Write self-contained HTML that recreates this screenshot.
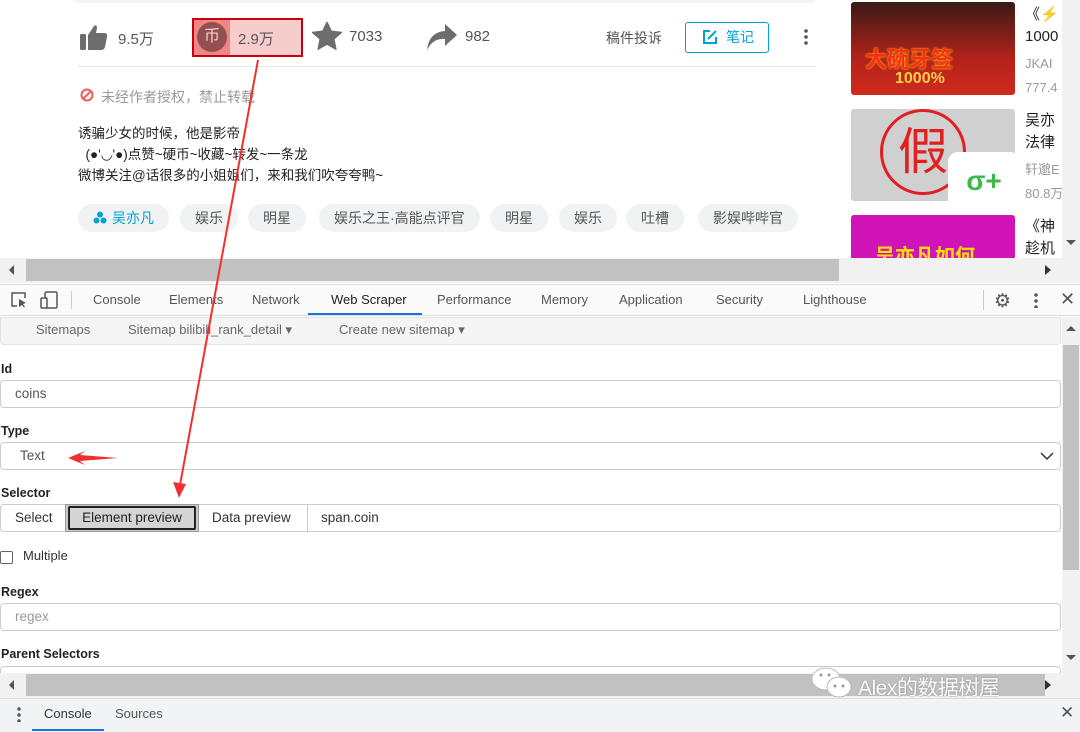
<!DOCTYPE html>
<html><head><meta charset="utf-8"><style>
*{box-sizing:border-box;margin:0;padding:0}
body{width:1080px;height:732px;overflow:hidden;position:relative;background:#fff;font-family:"Liberation Sans","Noto Sans CJK SC",sans-serif;color:#333}
.a{position:absolute}
.t{font-size:14px;color:#333}
.tag{position:absolute;top:204px;height:28px;border-radius:14px;background:#f1f2f3;font-size:14px;color:#555;line-height:28px;padding:0 15px}
.tab{position:absolute;top:292px;font-size:13px;color:#555}
.lbl{position:absolute;left:1px;font-size:12.5px;font-weight:bold;color:#222}
.inp{position:absolute;left:0;width:1061px;height:28px;border:1px solid #ccc;border-radius:4px;font-size:13.5px;color:#555;line-height:26px;padding-left:14px}
</style></head><body>
<div class="a" style="left:75px;top:0;width:740px;height:3px;background:#f4f5f7"></div>
<svg class="a" style="left:80px;top:24px" width="30" height="26" viewBox="0 0 30 26"><rect x="0" y="10" width="6" height="16" rx="1.5" fill="#6d6d6d"/><path d="M8 11 L14 2 Q17 0 17 4 L16 9 L25 9 Q28 10 27 13 L25 23 Q24 26 21 26 L8 26Z" fill="#6d6d6d"/></svg>
<div class="a t" style="left:118px;top:28px;font-size:15px;color:#555">9.5万</div>
<div class="a" style="left:192px;top:18px;width:111px;height:39px;border:2px solid #c9000a;background:#f7cccd"></div>
<div class="a" style="left:194px;top:20px;width:36px;height:35px;background:#ef8585"></div>
<div class="a" style="left:197px;top:22px;width:30px;height:30px;border-radius:50%;background:#945050;color:#f7cccd;font-size:16px;text-align:center;line-height:30px">币</div>
<div class="a t" style="left:238px;top:28px;font-size:15px;color:#555">2.9万</div>
<svg class="a" style="left:312px;top:22px" width="30" height="28" viewBox="0 0 24 23"><path d="M12 0 L15.5 7.5 L24 8.5 L17.7 14 L19.4 22.5 L12 18.3 L4.6 22.5 L6.3 14 L0 8.5 L8.5 7.5Z" fill="#6d6d6d" stroke="#6d6d6d" stroke-linejoin="round"/></svg>
<div class="a t" style="left:349px;top:28px;font-size:15px;color:#555">7033</div>
<svg class="a" style="left:427px;top:24px" width="30" height="26" viewBox="0 0 30 26"><path d="M18 0 L30 11 L18 22 L18 15 Q6 14 0 26 Q2 8 18 7Z" fill="#6d6d6d"/></svg>
<div class="a t" style="left:465px;top:28px;font-size:15px;color:#555">982</div>
<div class="a t" style="left:606px;top:28px;color:#555">稿件投诉</div>
<div class="a" style="left:685px;top:22px;width:84px;height:31px;border:1px solid #00a1d6;border-radius:3px;color:#00a1d6;font-size:14px;line-height:29px;padding-left:40px">笔记</div>
<svg class="a" style="left:703px;top:30px" width="14" height="14" viewBox="0 0 14 14"><path d="M7 1H1V13H13V7M5 9L13 1" stroke="#00a1d6" stroke-width="2" fill="none"/></svg>
<div class="a" style="left:804px;top:28px;width:4px;height:18px;background:radial-gradient(circle,#555 1.6px,transparent 2px) 0 0/4px 6px"></div>
<div class="a" style="left:78px;top:66px;width:738px;height:1px;background:#e7e7ee"></div>
<svg class="a" style="left:80px;top:88px" width="14" height="14" viewBox="0 0 14 14"><circle cx="7" cy="7" r="5.5" stroke="#f25d5d" stroke-width="2" fill="none"/><path d="M3 11L11 3" stroke="#f25d5d" stroke-width="2"/></svg>
<div class="a t" style="left:101px;top:87px;color:#999">未经作者授权，禁止转载</div>
<div class="a" style="left:78px;top:123px;font-size:13.5px;line-height:21px;color:#222">诱骗少女的时候，他是影帝<br>&nbsp;&nbsp;(●'◡'●)点赞~硬币~收藏~转发~一条龙<br>微博关注@话很多的小姐姐们，来和我们吹夸夸鸭~</div>
<div class="tag" style="left:78px;color:#00a1d6;padding-left:34px">吴亦凡</div>
<svg class="a" style="left:93px;top:211px" width="14" height="13" viewBox="0 0 14 13"><circle cx="7" cy="3.5" r="3" fill="#00a1d6"/><circle cx="3.5" cy="9.5" r="3" fill="#00a1d6"/><circle cx="10.5" cy="9.5" r="3" fill="#00a1d6"/></svg>
<div class="tag" style="left:180px">娱乐</div>
<div class="tag" style="left:248px">明星</div>
<div class="tag" style="left:319px">娱乐之王·高能点评官</div>
<div class="tag" style="left:490px">明星</div>
<div class="tag" style="left:559px">娱乐</div>
<div class="tag" style="left:626px">吐槽</div>
<div class="tag" style="left:698px">影娱哔哔官</div>
<div class="a" style="left:851px;top:2px;width:164px;height:93px;background:linear-gradient(180deg,#3a1a15,#b2221a 60%,#d02a1e);border-radius:3px"></div>
<div class="a" style="left:865px;top:42px;color:#ff2a1a;font-size:22px;font-weight:bold;text-shadow:0 0 2px #ff0">大碗牙签</div>
<div class="a" style="left:895px;top:70px;color:#ffd040;font-size:16px;font-weight:bold">1000%</div>
<div class="a" style="left:851px;top:109px;width:164px;height:92px;background:#d0d0d0;border-radius:3px"></div>
<div class="a" style="left:880px;top:109px;width:86px;height:86px;border:3px solid #e02020;border-radius:50%;color:#e02020;font-size:50px;line-height:80px;text-align:center">假</div>
<div class="a" style="left:948px;top:152px;width:72px;height:58px;background:#fff;border-radius:10px;color:#3bba4e;font-size:28px;font-weight:bold;text-align:center;line-height:58px">σ+</div>
<div class="a" style="left:851px;top:215px;width:164px;height:45px;background:#d014b8;border-radius:3px"></div>
<div class="a" style="left:875px;top:240px;color:#ffe000;font-size:20px;font-weight:bold">吴亦凡如何</div>
<div class="a" style="left:1025px;top:4px;font-size:15px;line-height:22px;color:#222">《⚡<br>1000</div>
<div class="a" style="left:1025px;top:52px;font-size:13px;line-height:24px;color:#999">JKAI<br>777.4</div>
<div class="a" style="left:1025px;top:110px;font-size:15px;line-height:22px;color:#222">吴亦<br>法律</div>
<div class="a" style="left:1025px;top:158px;font-size:13px;line-height:24px;color:#999">轩邈E<br>80.8万</div>
<div class="a" style="left:1025px;top:216px;font-size:15px;line-height:22px;color:#222">《神<br>趁机</div>
<div class="a" style="left:1062px;top:0;width:18px;height:258px;background:#f1f1f1"></div>
<div class="a" style="left:1066px;top:240px;border:5px solid transparent;border-top:5px solid #555"></div>
<div class="a" style="left:0;top:258px;width:1080px;height:25px;background:#f1f1f1"></div>
<div class="a" style="left:26px;top:259px;width:813px;height:22px;background:#c1c1c1"></div>
<div class="a" style="left:9px;top:265px;border:5px solid transparent;border-right:5px solid #555;border-left:0"></div>
<div class="a" style="left:1045px;top:265px;border:5px solid transparent;border-left:6px solid #333;border-right:0"></div>
<div class="a" style="left:0;top:284px;width:1080px;height:32px;background:#fafafa;border-bottom:1px solid #ddd;border-top:1px solid #ddd"></div>
<svg class="a" style="left:11px;top:292px" width="16" height="16" viewBox="0 0 16 16"><path d="M6 14H1V1H14V6" stroke="#555" stroke-width="1.5" fill="none"/><path d="M8 7L15 11L12 12L14 15L13 15.5L11 13L8 15Z" fill="#555"/></svg>
<svg class="a" style="left:40px;top:291px" width="20" height="18" viewBox="0 0 20 18"><rect x="5" y="1" width="12" height="16" rx="1.5" stroke="#555" stroke-width="1.5" fill="none"/><rect x="1" y="7" width="6" height="10" rx="1" stroke="#555" stroke-width="1.5" fill="#fafafa"/></svg>
<div class="a" style="left:71px;top:291px;width:1px;height:18px;background:#ccc"></div>
<div class="tab" style="left:93px">Console</div>
<div class="tab" style="left:169px">Elements</div>
<div class="tab" style="left:252px">Network</div>
<div class="tab" style="left:331px;color:#222">Web Scraper</div>
<div class="a" style="left:308px;top:313px;width:114px;height:2px;background:#1a73e8"></div>
<div class="tab" style="left:437px">Performance</div>
<div class="tab" style="left:541px">Memory</div>
<div class="tab" style="left:619px">Application</div>
<div class="tab" style="left:716px">Security</div>
<div class="tab" style="left:803px">Lighthouse</div>
<div class="a" style="left:983px;top:290px;width:1px;height:20px;background:#ccc"></div>
<div class="a" style="left:994px;top:290px;font-size:19px;color:#555">⚙</div>
<div class="a" style="left:1034px;top:292px;width:4px;height:16px;background:radial-gradient(circle,#555 1.5px,transparent 2px) 0 0/4px 6px"></div>
<div class="a" style="left:1060px;top:289px;font-size:18px;color:#555">✕</div>
<div class="a" style="left:0;top:317px;width:1061px;height:28px;background:#f5f5f5;border:1px solid #e3e3e3;border-radius:0 0 4px 4px"></div>
<div class="a" style="left:36px;top:322px;font-size:13px;color:#666">Sitemaps</div>
<div class="a" style="left:128px;top:322px;font-size:13px;color:#666">Sitemap bilibili_rank_detail ▾</div>
<div class="a" style="left:339px;top:322px;font-size:13px;color:#666">Create new sitemap ▾</div>
<div class="lbl" style="top:362px">Id</div>
<div class="inp" style="top:380px">coins</div>
<div class="lbl" style="top:424px">Type</div>
<div class="inp" style="top:442px;padding-left:19px">Text</div>
<svg class="a" style="left:1040px;top:451px" width="14" height="10" viewBox="0 0 14 10"><path d="M1 2L7 8L13 2" stroke="#333" stroke-width="1.5" fill="none"/></svg>
<div class="lbl" style="top:486px">Selector</div>
<div class="inp" style="top:504px;padding:0"></div>
<div class="a" style="left:15px;top:510px;font-size:13.5px;color:#333">Select</div>
<div class="a" style="left:65px;top:504px;width:134px;height:28px;border:1px solid #999;background:#ccc"></div>
<div class="a" style="left:68px;top:506px;width:128px;height:24px;border:2px solid #222;border-radius:2px;background:#d4d4d4;font-size:13.5px;text-align:center;line-height:20px;color:#222">Element preview</div>
<div class="a" style="left:212px;top:510px;font-size:13.5px;color:#333">Data preview</div>
<div class="a" style="left:307px;top:505px;width:1px;height:26px;background:#ccc"></div>
<div class="a" style="left:321px;top:510px;font-size:13.5px;color:#333">span.coin</div>
<div class="a" style="left:0;top:551px;width:13px;height:13px;border:1px solid #666;border-radius:2px"></div>
<div class="a" style="left:23px;top:548px;font-size:13px;color:#333">Multiple</div>
<div class="lbl" style="top:585px">Regex</div>
<div class="inp" style="top:603px;color:#999">regex</div>
<div class="lbl" style="top:647px">Parent Selectors</div>
<div class="inp" style="top:666px;height:20px"></div>
<div class="a" style="left:1062px;top:317px;width:18px;height:356px;background:#f1f1f1"></div>
<div class="a" style="left:1063px;top:345px;width:16px;height:225px;background:#c1c1c1"></div>
<div class="a" style="left:1066px;top:326px;border:5px solid transparent;border-bottom:5px solid #555;border-top:0"></div>
<div class="a" style="left:1066px;top:655px;border:5px solid transparent;border-top:5px solid #555;border-bottom:0"></div>
<div class="a" style="left:0;top:673px;width:1080px;height:25px;background:#f1f1f1"></div>
<div class="a" style="left:26px;top:674px;width:1019px;height:22px;background:#c1c1c1"></div>
<div class="a" style="left:9px;top:680px;border:5px solid transparent;border-right:5px solid #555;border-left:0"></div>
<div class="a" style="left:1045px;top:680px;border:5px solid transparent;border-left:6px solid #333;border-right:0"></div>
<svg class="a" style="left:810px;top:666px" width="46" height="36" viewBox="0 0 46 36"><ellipse cx="16" cy="13" rx="14" ry="11" fill="#fff" stroke="#bbb"/><ellipse cx="29" cy="21" rx="12" ry="10" fill="#fff" stroke="#bbb"/><circle cx="25" cy="20" r="1.5" fill="#999"/><circle cx="33" cy="20" r="1.5" fill="#999"/><circle cx="11" cy="9" r="1.5" fill="#999"/><circle cx="19" cy="9" r="1.5" fill="#999"/></svg>
<div class="a" style="left:858px;top:672px;font-size:21px;color:#fff;text-shadow:0 0 1.5px #777;letter-spacing:-0.5px">Alex的数据树屋</div>
<div class="a" style="left:0;top:698px;width:1080px;height:34px;background:#f1f3f4;border-top:1px solid #ddd"></div>
<div class="a" style="left:17px;top:706px;width:4px;height:16px;background:radial-gradient(circle,#555 1.5px,transparent 2px) 0 0/4px 6px"></div>
<div class="a" style="left:44px;top:706px;font-size:13px;color:#333">Console</div>
<div class="a" style="left:32px;top:729px;width:72px;height:2px;background:#1a73e8"></div>
<div class="a" style="left:115px;top:706px;font-size:13px;color:#555">Sources</div>
<div class="a" style="left:1060px;top:703px;font-size:17px;color:#555">✕</div>
<svg class="a" style="left:0;top:0" width="1080" height="732"><line x1="258" y1="60" x2="180" y2="485" stroke="#f03030" stroke-width="2"/><path d="M173 482L179 498L186 484Z" fill="#f03030"/><path d="M118 458L80 455L85 451L68 458L85 465L80 461Z" fill="#f03030"/></svg>
</body></html>
